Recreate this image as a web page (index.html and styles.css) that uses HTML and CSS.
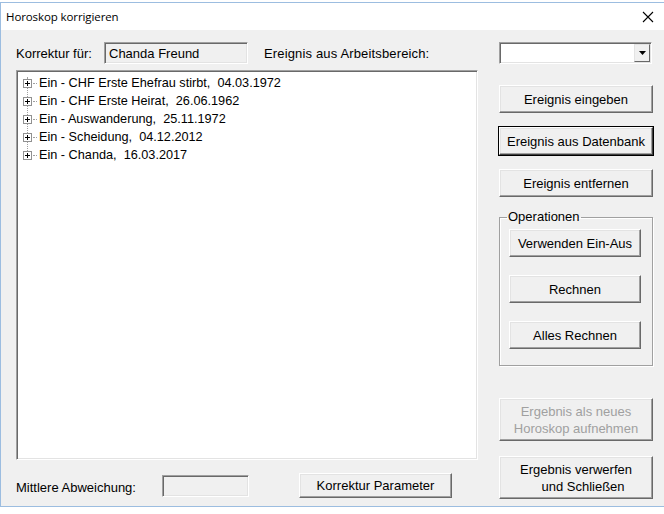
FILE: index.html
```html
<!DOCTYPE html>
<html lang="de">
<head>
  <meta charset="UTF-8">
  <title>Horoskop korrigieren</title>
  <link rel="stylesheet" href="styles.css">
</head>
<body>

  <div class="window">
    <div class="titlebar">
      <span class="title">Horoskop korrigieren</span>
      <svg class="close" width="12" height="12" viewBox="0 0 12 12">
        <path d="M1 1 L11 11 M11 1 L1 11" stroke="#000" stroke-width="1.1" fill="none"/>
      </svg>
    </div>

    <div class="content">
      <!-- linke Spalte -->
      <div class="left">
        <div class="toprow">
          <span class="lbl lbl-korr">Korrektur für:</span>
          <div class="field field-name">Chanda Freund</div>
          <span class="lbl lbl-ereignis">Ereignis aus Arbeitsbereich:</span>
        </div>

        <div class="tree">
          <div class="vline"></div>
          <div class="node"><span class="plus"></span><span class="dots"></span><span class="txt">Ein - CHF Erste Ehefrau stirbt,  04.03.1972</span></div>
          <div class="node"><span class="plus"></span><span class="dots"></span><span class="txt">Ein - CHF Erste Heirat,  26.06.1962</span></div>
          <div class="node"><span class="plus"></span><span class="dots"></span><span class="txt">Ein - Auswanderung,  25.11.1972</span></div>
          <div class="node"><span class="plus"></span><span class="dots"></span><span class="txt">Ein - Scheidung,  04.12.2012</span></div>
          <div class="node"><span class="plus"></span><span class="dots"></span><span class="txt">Ein - Chanda,  16.03.2017</span></div>
        </div>

        <div class="bottomrow">
          <span class="lbl lbl-abw">Mittlere Abweichung:</span>
          <div class="field field-abw"></div>
          <button class="btn btn-param">Korrektur Parameter</button>
        </div>
      </div>

      <!-- rechte Spalte -->
      <div class="right">
        <div class="combo">
          <div class="combo-btn">
            <svg width="7" height="4" viewBox="0 0 7 4"><path d="M0 0 H7 L3.5 4 Z" fill="#000"/></svg>
          </div>
        </div>

        <button class="btn btn-side first">Ereignis eingeben</button>
        <button class="btn btn-side default">Ereignis aus Datenbank</button>
        <button class="btn btn-side">Ereignis entfernen</button>

        <fieldset class="group">
          <legend>Operationen</legend>
          <button class="btn btn-op">Verwenden Ein-Aus</button>
          <button class="btn btn-op">Rechnen</button>
          <button class="btn btn-op">Alles Rechnen</button>
        </fieldset>

        <button class="btn btn-tall disabled">Ergebnis als neues<br>Horoskop aufnehmen</button>
        <button class="btn btn-tall close-btn">Ergebnis verwerfen<br><span class="indent">und Schließen</span></button>
      </div>
    </div>
  </div>

</body>
</html>
```

FILE: styles.css
```css
body {
  margin: 0;
  background-color: #fff;
  font-family: 'Liberation Sans', Arial, sans-serif;
  font-size: 13px;
  color: #000;
  overflow: hidden;
}

.window {
  margin-top: 2px;
  width: 680px;
  border: 1px solid #9cbde0;
  background-color: #f0f0f0;
}

.titlebar {
  height: 27px;
  background-color: #fff;
  display: flex;
  align-items: center;
  padding-left: 5px;
  position: relative;
}

.title {
  font-family: 'Open Sans', 'Noto Sans', sans-serif;
  font-size: 11.5px;
  letter-spacing: -0.1px;
  margin-top: -1px;
}

.close {
  position: absolute;
  left: 641px;
  top: 8px;
}

.content {
  display: flex;
  padding: 12px 0 7px 15px;
}

/* linke Spalte */
.left {
  width: 462px;
  display: flex;
  flex-direction: column;
}

.toprow {
  display: flex;
  align-items: center;
  height: 22px;
}

.lbl {
  white-space: nowrap;
}

.lbl-korr {
  width: 88px;
}

.lbl-ereignis {
  margin-left: 16px;
  letter-spacing: 0.15px;
}

.field {
  box-sizing: border-box;
  height: 22px;
  background-color: #f0f0f0;
  border: 1px solid;
  border-color: #a0a0a0 #fff #fff #a0a0a0;
  box-shadow: inset 1px 1px #696969, inset -1px -1px #e3e3e3;
  padding: 3px 0 0 4px;
}

.field-name {
  width: 144px;
}

.tree {
  position: relative;
  box-sizing: border-box;
  margin-top: 6px;
  height: 390px;
  background-color: #fff;
  border: 1px solid;
  border-color: #a0a0a0 #fff #fff #a0a0a0;
  box-shadow: inset 1px 1px #696969, inset -1px -1px #e3e3e3;
  padding-top: 3px;
}

.vline {
  position: absolute;
  left: 10px;
  top: 6px;
  height: 80px;
  border-left: 1px dotted #a0a0a0;
}

.node {
  position: relative;
  display: flex;
  align-items: center;
  height: 18px;
  padding-left: 6px;
}

.plus {
  position: relative;
  box-sizing: border-box;
  width: 9px;
  height: 9px;
  border: 1px solid #919191;
  background-color: #fff;
}

.plus::before {
  content: "";
  position: absolute;
  left: 1px;
  top: 3px;
  width: 5px;
  height: 1px;
  background-color: #000;
}

.plus::after {
  content: "";
  position: absolute;
  left: 3px;
  top: 1px;
  width: 1px;
  height: 5px;
  background-color: #000;
}

.dots {
  width: 4px;
  margin: 0 2px 0 1px;
  border-top: 1px dotted #a0a0a0;
}

.txt {
  white-space: pre;
  font-size: 12.7px;
}

.bottomrow {
  display: flex;
  align-items: center;
  margin-top: 13px;
  height: 25px;
}

.lbl-abw {
  width: 146px;
  padding-top: 3px;
}

.field-abw {
  width: 87px;
}

/* Buttons */
.btn {
  box-sizing: border-box;
  font-family: 'Liberation Sans', Arial, sans-serif;
  font-size: 13px;
  color: #000;
  background-color: #f0f0f0;
  border: 1px solid;
  border-color: #fff #696969 #696969 #fff;
  box-shadow: inset -1px -1px #a0a0a0, inset 1px 1px #e3e3e3;
  padding: 0;
  margin: 0;
}

.btn-param {
  margin-left: 50px;
  width: 153px;
  height: 25px;
}

/* rechte Spalte */
.right {
  margin-left: 21px;
  width: 154px;
  display: flex;
  flex-direction: column;
}

.combo {
  position: relative;
  box-sizing: border-box;
  width: 153px;
  height: 22px;
  background-color: #fff;
  border: 1px solid;
  border-color: #a0a0a0 #fff #fff #a0a0a0;
  box-shadow: inset 1px 1px #696969, inset -1px -1px #e3e3e3;
}

.combo-btn {
  position: absolute;
  right: 1px;
  top: 1px;
  box-sizing: border-box;
  width: 16px;
  height: 18px;
  background-color: #f0f0f0;
  border: 1px solid;
  border-color: #e3e3e3 #696969 #696969 #e3e3e3;
  display: flex;
  align-items: center;
  justify-content: center;
}

.btn-side {
  width: 154px;
  height: 28px;
  margin-top: 13px;
}

.btn-side.first {
  margin-top: 21px;
}

.btn-side.default {
  outline: 1px solid #000;
  outline-offset: 0;
  border-color: #fff #404040 #404040 #fff;
}

.btn-side + .btn-side {
  margin-top: 14px;
}

.group {
  margin: 13px 0 0 0;
  padding: 5px 0 0 9px;
  width: 154px;
  height: 156px;
  box-sizing: border-box;
  border: 1px solid #a0a0a0;
  box-shadow: 1px 1px #fff, inset 1px 1px #fff;
  display: flex;
  flex-direction: column;
}

.group legend {
  padding: 0 1px;
  margin-left: -2px;
  line-height: 14px;
}

.btn-op {
  width: 132px;
  height: 28px;
  margin-bottom: 18px;
}

.btn-tall {
  width: 154px;
  height: 43px;
  line-height: 17px;
}

.disabled {
  margin-top: 32px;
  color: #a0a0a0;
}

.close-btn {
  margin-top: 15px;
}

.indent {
  padding-left: 14px;
}
```
